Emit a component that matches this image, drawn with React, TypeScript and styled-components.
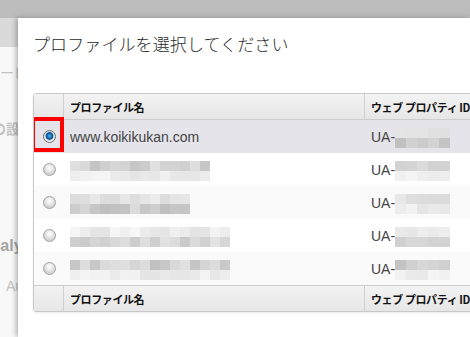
import React from "react";
import styled, { createGlobalStyle } from "styled-components";

const GlobalStyle = createGlobalStyle`
  html, body {
    margin: 0;
    padding: 0;
    overflow: hidden;
    background: #f7f7f7;
  }
  body {
    font-family: "Liberation Sans", Arial, sans-serif;
  }
`;

type Tone = [number, number];

type Blur = { cols: number; w: number; lines: [Tone, Tone] };

type Row = {
  name?: string;
  nameBlur?: Blur;
  uaBlur: Blur;
  selected?: boolean;
};

const rows: Row[] = [
  {
    name: "www.koikikukan.com",
    selected: true,
    uaBlur: { cols: 5, w: 11, lines: [[222, 230], [188, 212]] },
  },
  {
    nameBlur: { cols: 14, w: 10, lines: [[196, 224], [228, 246]] },
    uaBlur: { cols: 5, w: 11, lines: [[205, 222], [236, 246]] },
  },
  {
    nameBlur: { cols: 12, w: 10, lines: [[214, 236], [192, 220]] },
    uaBlur: { cols: 5, w: 11, lines: [[212, 232], [226, 242]] },
  },
  {
    nameBlur: { cols: 16, w: 10, lines: [[226, 248], [198, 226]] },
    uaBlur: { cols: 5, w: 11, lines: [[228, 244], [198, 218]] },
  },
  {
    nameBlur: { cols: 16, w: 10, lines: [[192, 226], [228, 246]] },
    uaBlur: { cols: 5, w: 11, lines: [[194, 218], [232, 246]] },
  },
];

// deterministic pseudo-random gray level
const gray = (seed: number, i: number, [lo, hi]: Tone) => {
  const x = Math.sin(seed * 91.3 + i * 17.7) * 10000;
  const f = x - Math.floor(x);
  const v = Math.round(lo + f * (hi - lo));
  return `rgb(${v},${v},${v})`;
};

const Mosaic: React.FC<{ blur: Blur; seed: number }> = ({ blur, seed }) => (
  <MosaicGrid $cols={blur.cols} $w={blur.w}>
    {blur.lines.map((tone, line) =>
      Array.from({ length: blur.cols }, (_, i) => (
        <Tile key={`${line}-${i}`} $c={gray(seed + line * 7, i, tone)} />
      ))
    )}
  </MosaicGrid>
);

const App: React.FC = () => {
  return (
    <>
      <GlobalStyle />
      <Page>
        <TopBar />

        {/* page behind the dialog */}
        <Side>
          <SideHead />
          <SideItem $top={17} $shift={-14}>サービス設定</SideItem>
          <SideItem $top={38} $shift={-8} $bold>
            の設定
          </SideItem>
          <SideItem $top={98} $shift={-21} $bold $big>
            Analytics
          </SideItem>
          <SideItem $top={21} $shift={6}>
            Auto
          </SideItem>
        </Side>

        <Dialog>
          <Title>プロファイルを選択してください</Title>

          <Table>
            <HeadRow>
              <HeadCell />
              <HeadCell>プロファイル名</HeadCell>
              <HeadCell>ウェブ プロパティ ID</HeadCell>
            </HeadRow>

            {rows.map((row, i) => (
              <BodyRow key={i} $selected={row.selected} $alt={i % 2 === 0}>
                <RadioCell>
                  <Radio $checked={row.selected} />
                  {row.selected && <Highlight />}
                </RadioCell>
                <NameCell>
                  {row.name ? row.name : row.nameBlur && <Mosaic blur={row.nameBlur} seed={i * 3 + 1} />}
                </NameCell>
                <NameCell>
                  UA-
                  <Mosaic blur={row.uaBlur} seed={i * 5 + 2} />
                </NameCell>
              </BodyRow>
            ))}

            <FootRow>
              <HeadCell />
              <HeadCell>プロファイル名</HeadCell>
              <HeadCell>ウェブ プロパティ ID</HeadCell>
            </FootRow>
          </Table>
        </Dialog>
      </Page>
    </>
  );
};

export default App;

/* Styled Components */
const Page = styled.div`
  width: 470px;
  height: 337px;
  display: grid;
  grid-template-columns: 18px 1fr;
  grid-template-rows: 18px 1fr;
  overflow: hidden;
`;

const TopBar = styled.div`
  grid-column: 1 / 3;
  background: #bcbcbc;
`;

const Side = styled.div`
  display: flex;
  flex-direction: column;
  overflow: hidden;
  background: #f8f8f8;
`;

const SideHead = styled.div`
  height: 29px;
  flex-shrink: 0;
  background: #dadada;
`;

const SideItem = styled.div<{ $top: number; $shift: number; $bold?: boolean; $big?: boolean }>`
  margin-top: ${({ $top }) => $top}px;
  margin-left: ${({ $shift }) => $shift}px;
  white-space: nowrap;
  font-family: "Liberation Sans", "Noto Sans CJK JP", sans-serif;
  font-size: ${({ $big }) => ($big ? 16 : 14)}px;
  line-height: ${({ $big }) => ($big ? 20 : 18)}px;
  font-weight: ${({ $bold }) => ($bold ? 700 : 400)};
  color: ${({ $big }) => ($big ? "#a4a4a4" : "#c2c2c2")};
`;

const Dialog = styled.div`
  position: relative;
  background: #ffffff;
  box-shadow: -2px 0 5px rgba(0, 0, 0, 0.28);
  padding: 14px 0 0 15px;
  overflow: hidden;
`;

const Title = styled.h1`
  margin: 0;
  font-family: "Noto Sans CJK JP", sans-serif;
  font-size: 17px;
  line-height: 24px;
  font-weight: 300;
  color: #2a2a2a;
  letter-spacing: 0.1px;
`;

const Table = styled.div`
  margin-top: 37px;
  width: 470px;
  border: 1px solid #c9c9c9;
  border-radius: 3px;
  overflow: hidden;
  box-shadow: 0 1px 2px rgba(0, 0, 0, 0.08);
`;

const HeadRow = styled.div`
  display: grid;
  grid-template-columns: 30px 301px 1fr;
  height: 25px;
  background: linear-gradient(#f3f3f3, #e6e6e6);
  border-bottom: 1px solid #cdcdcd;
`;

const FootRow = styled(HeadRow)`
  border-bottom: none;
  border-top: 1px solid #cdcdcd;
`;

const HeadCell = styled.div`
  display: flex;
  align-items: center;
  padding-left: 6px;
  border-right: 1px solid #cfcfcf;
  font-family: "Noto Sans CJK JP", sans-serif;
  font-size: 11px;
  font-weight: 700;
  letter-spacing: -0.4px;
  color: #111;
  white-space: nowrap;

  &:last-child {
    border-right: none;
  }
`;

const BodyRow = styled.div<{ $selected?: boolean; $alt?: boolean }>`
  display: grid;
  grid-template-columns: 30px 301px 1fr;
  height: 33px;
  background: ${({ $selected, $alt }) => ($selected ? "#e4e4ea" : $alt ? "#fafafa" : "#ffffff")};
`;

const RadioCell = styled.div`
  position: relative;
  display: flex;
  align-items: center;
  justify-content: center;
`;

const Radio = styled.span<{ $checked?: boolean }>`
  width: 11px;
  height: 11px;
  border-radius: 50%;
  border: 1px solid ${({ $checked }) => ($checked ? "#6c6c6c" : "#a2a2a2")};
  background: ${({ $checked }) =>
    $checked
      ? "radial-gradient(circle at 50% 45%, #58b4f0 0, #1a76c0 2px, #0d4f8a 3.4px, #c9d2da 4.2px, #f4f4f4 5.5px)"
      : "radial-gradient(circle at 50% 35%, #ffffff 0, #ececec 3px, #d2d2d2 6px)"};
`;

const Highlight = styled.span`
  position: absolute;
  left: -3px;
  top: -3px;
  width: 33px;
  height: 35px;
  box-sizing: border-box;
  border: 4px solid #ff0000;
`;

const NameCell = styled.div`
  display: flex;
  align-items: center;
  padding-left: 6px;
  font-family: "Liberation Sans", Arial, sans-serif;
  font-size: 14px;
  color: #444;
  white-space: nowrap;
`;

const MosaicGrid = styled.div<{ $cols: number; $w: number }>`
  display: grid;
  grid-template-columns: repeat(${({ $cols }) => $cols}, ${({ $w }) => $w}px);
  grid-auto-rows: 10px;
  margin-top: 2px;
`;

const Tile = styled.span<{ $c: string }>`
  background: ${({ $c }) => $c};
`;
